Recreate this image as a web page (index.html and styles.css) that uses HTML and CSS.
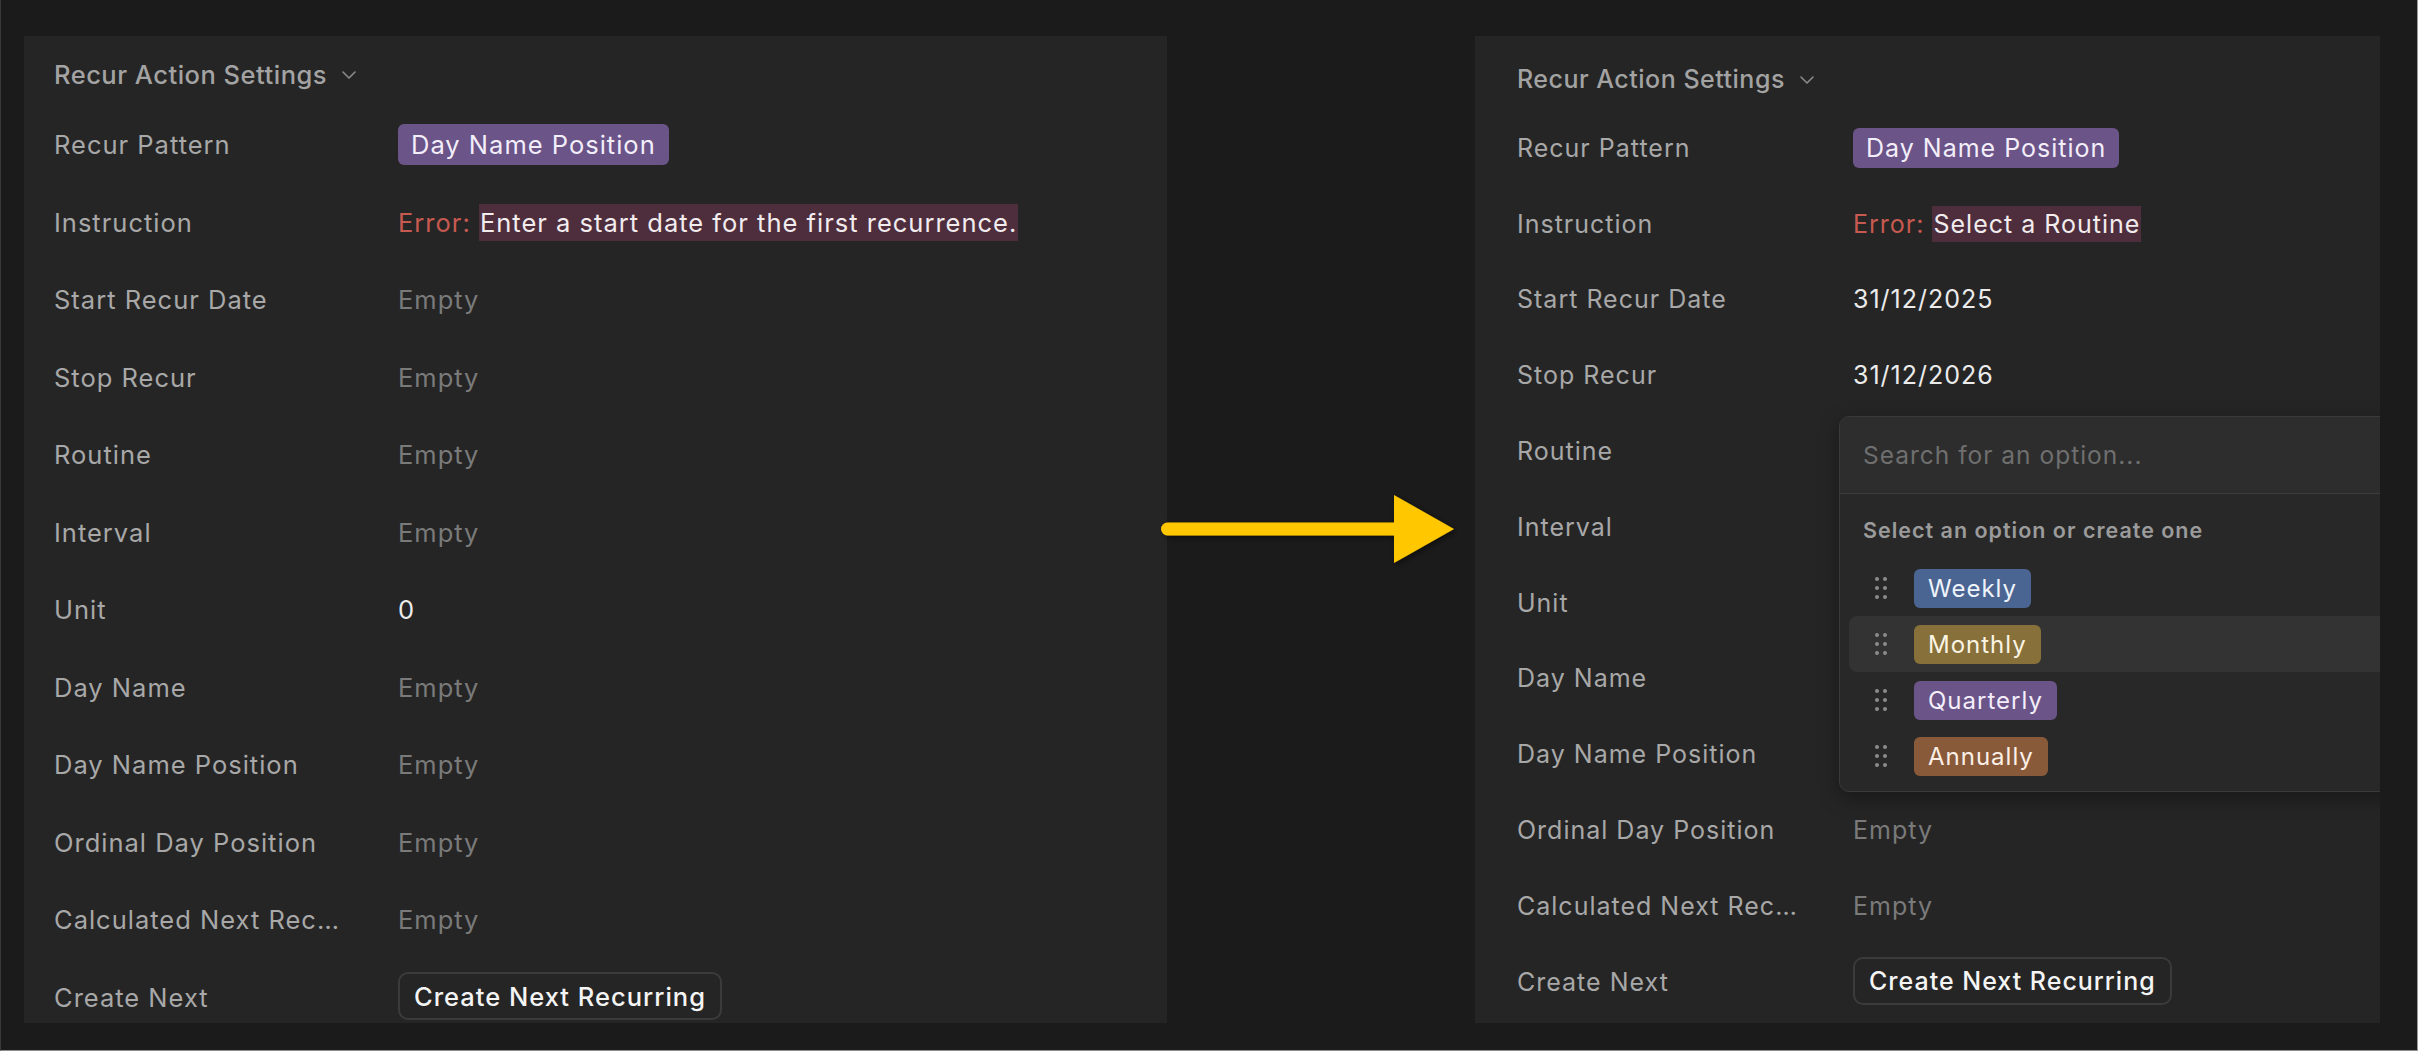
FILE: index.html
```html
<!DOCTYPE html>
<html lang="en">
<head>
  <meta charset="UTF-8">
  <meta name="viewport" content="width=device-width, initial-scale=1.0">
  <title>Recur Action Settings</title>
  <link rel="stylesheet" href="styles.css">
</head>
<body>
  <div class="frame">

    <!-- before: no start date yet -->
    <section class="panel panel-left">
      <div class="panel-head">
        Recur Action Settings
        <svg class="chevron" width="16" height="10" viewBox="0 0 16 10"><path d="M2 2l6 6 6-6" fill="none" stroke="#8a8a8a" stroke-width="1.6" stroke-linecap="round" stroke-linejoin="round"/></svg>
      </div>
      <div class="props">
        <div class="row"><span class="label">Recur Pattern</span><span class="value"><span class="chip chip-purple">Day Name Position</span></span></div>
        <div class="row"><span class="label">Instruction</span><span class="value"><span class="err">Error:</span> <span class="err-msg">Enter a start date for the first recurrence.</span></span></div>
        <div class="row"><span class="label">Start Recur Date</span><span class="value empty">Empty</span></div>
        <div class="row"><span class="label">Stop Recur</span><span class="value empty">Empty</span></div>
        <div class="row"><span class="label">Routine</span><span class="value empty">Empty</span></div>
        <div class="row"><span class="label">Interval</span><span class="value empty">Empty</span></div>
        <div class="row"><span class="label">Unit</span><span class="value">0</span></div>
        <div class="row"><span class="label">Day Name</span><span class="value empty">Empty</span></div>
        <div class="row"><span class="label">Day Name Position</span><span class="value empty">Empty</span></div>
        <div class="row"><span class="label">Ordinal Day Position</span><span class="value empty">Empty</span></div>
        <div class="row"><span class="label">Calculated Next Recurrence</span><span class="value empty">Empty</span></div>
        <div class="row"><span class="label">Create Next</span><span class="value"><button class="btn">Create Next Recurring</button></span></div>
      </div>
    </section>

    <div class="arrow">
      <svg width="300" height="80" viewBox="0 0 300 80">
        <defs>
          <filter id="shadow" x="-20%" y="-20%" width="140%" height="140%">
            <feDropShadow dx="2" dy="2" stdDeviation="3" flood-color="#000" flood-opacity="0.55"/>
          </filter>
        </defs>
        <g filter="url(#shadow)" fill="#ffc700">
          <path d="M7.5 39H238" stroke="#ffc700" stroke-width="13" stroke-linecap="round"/>
          <polygon points="234,5 294,39 234,73"/>
        </g>
      </svg>
    </div>

    <!-- after: dates filled, routine picker open -->
    <section class="panel panel-right">
      <div class="panel-head">
        Recur Action Settings
        <svg class="chevron" width="16" height="10" viewBox="0 0 16 10"><path d="M2 2l6 6 6-6" fill="none" stroke="#8a8a8a" stroke-width="1.6" stroke-linecap="round" stroke-linejoin="round"/></svg>
      </div>
      <div class="props">
        <div class="row"><span class="label">Recur Pattern</span><span class="value"><span class="chip chip-purple">Day Name Position</span></span></div>
        <div class="row"><span class="label">Instruction</span><span class="value"><span class="err">Error:</span> <span class="err-msg">Select a Routine</span></span></div>
        <div class="row"><span class="label">Start Recur Date</span><span class="value">31/12/2025</span></div>
        <div class="row"><span class="label">Stop Recur</span><span class="value">31/12/2026</span></div>
        <div class="row"><span class="label">Routine</span><span class="value empty">Empty</span></div>
        <div class="row"><span class="label">Interval</span><span class="value empty">Empty</span></div>
        <div class="row"><span class="label">Unit</span><span class="value">0</span></div>
        <div class="row"><span class="label">Day Name</span><span class="value empty">Empty</span></div>
        <div class="row"><span class="label">Day Name Position</span><span class="value empty">Empty</span></div>
        <div class="row"><span class="label">Ordinal Day Position</span><span class="value empty">Empty</span></div>
        <div class="row"><span class="label">Calculated Next Recurrence</span><span class="value empty">Empty</span></div>
        <div class="row"><span class="label">Create Next</span><span class="value"><button class="btn">Create Next Recurring</button></span></div>
      </div>

      <div class="dropdown">
        <div class="dd-search">Search for an option...</div>
        <div class="dd-hint">Select an option or create one</div>
        <div class="dd-options">
          <div class="option">
            <svg class="grip" width="12" height="22" viewBox="0 0 12 22"><g fill="#8c8c8c"><circle cx="2" cy="2" r="2"/><circle cx="10" cy="2" r="2"/><circle cx="2" cy="11" r="2"/><circle cx="10" cy="11" r="2"/><circle cx="2" cy="20" r="2"/><circle cx="10" cy="20" r="2"/></g></svg>
            <span class="chip chip-blue">Weekly</span>
          </div>
          <div class="option active">
            <svg class="grip" width="12" height="22" viewBox="0 0 12 22"><g fill="#8c8c8c"><circle cx="2" cy="2" r="2"/><circle cx="10" cy="2" r="2"/><circle cx="2" cy="11" r="2"/><circle cx="10" cy="11" r="2"/><circle cx="2" cy="20" r="2"/><circle cx="10" cy="20" r="2"/></g></svg>
            <span class="chip chip-yellow">Monthly</span>
          </div>
          <div class="option">
            <svg class="grip" width="12" height="22" viewBox="0 0 12 22"><g fill="#8c8c8c"><circle cx="2" cy="2" r="2"/><circle cx="10" cy="2" r="2"/><circle cx="2" cy="11" r="2"/><circle cx="10" cy="11" r="2"/><circle cx="2" cy="20" r="2"/><circle cx="10" cy="20" r="2"/></g></svg>
            <span class="chip chip-purple">Quarterly</span>
          </div>
          <div class="option">
            <svg class="grip" width="12" height="22" viewBox="0 0 12 22"><g fill="#8c8c8c"><circle cx="2" cy="2" r="2"/><circle cx="10" cy="2" r="2"/><circle cx="2" cy="11" r="2"/><circle cx="10" cy="11" r="2"/><circle cx="2" cy="20" r="2"/><circle cx="10" cy="20" r="2"/></g></svg>
            <span class="chip chip-brown">Annually</span>
          </div>
        </div>
      </div>
    </section>

  </div>
</body>
</html>
```

FILE: styles.css
```css
* {
  box-sizing: border-box;
}
body {
  margin: 0;
  background: #1b1b1b;
  font-family: Inter, "Noto Sans", sans-serif;
  color: #a6a6a6;
  letter-spacing: 1px;
}
.frame {
  width: 2418px;
  height: 1051px;
  display: flex;
  align-items: flex-start;
  padding: 36px 37px 0 23px;
  border-left: 1px solid #3a3a3a;
  border-right: 1px solid #9a9a9a;
  border-bottom: 1px solid #8e8e8e;
  overflow: hidden;
}
.panel {
  position: relative;
  background: #252525;
  height: 987px;
  overflow: hidden;
  flex-shrink: 0;
}
.panel-left {
  width: 1143px;
  padding: 6px 0 0 30px;
  font-size: 25.5px;
}
.panel-right {
  width: 905px;
  padding: 12px 0 0 42px;
  font-size: 25px;
}
.panel-head {
  display: flex;
  align-items: center;
  gap: 14px;
  height: 64px;
  font-weight: 500;
  letter-spacing: 0.5px;
  color: #a3a3a3;
}
.panel-right .panel-head {
  height: 62px;
}
.chevron {
  margin-top: 2px;
}
.row {
  display: flex;
  align-items: center;
  height: 77.5px;
}
.panel-right .row {
  height: 75.8px;
}
.label {
  width: 344px;
  flex-shrink: 0;
  padding-right: 50px;
  white-space: nowrap;
  overflow: hidden;
  text-overflow: ellipsis;
  color: #a8a8a8;
}
.panel-right .label {
  width: 336px;
}
.value {
  color: #ebebeb;
  white-space: nowrap;
}
.value.empty {
  color: #7a7a7a;
}
.chip {
  display: inline-flex;
  align-items: center;
  height: 41px;
  padding: 0 13px;
  border-radius: 6px;
  color: #f3eefa;
}
.panel-right .chip {
  height: 40px;
}
.chip-purple { background: #6a5488; }
.chip-blue { background: #4a6592; color: #eef3fb; }
.chip-yellow { background: #87703a; color: #fbf4e2; }
.chip-brown { background: #895a3a; color: #fbefe6; }
.err {
  color: #c75a50;
}
.err-msg {
  background: #4e2e3d;
  color: #f2ecee;
  padding: 3px 1px;
}
.btn {
  font-family: inherit;
  font-size: inherit;
  letter-spacing: inherit;
  font-weight: 500;
  color: #f4f4f4;
  background: #252525;
  border: 2px solid #3b3b3b;
  border-radius: 10px;
  height: 48px;
  padding: 0 14px;
  margin-top: -2px;
}
.arrow {
  width: 308px;
  flex-shrink: 0;
  margin-top: 454px;
  position: relative;
  z-index: 2;
}
.arrow svg {
  display: block;
  margin-left: -7px;
}
.dropdown {
  position: absolute;
  left: 364px;
  top: 380px;
  width: 620px;
  background: #282828;
  border: 1px solid #3a3a3a;
  border-radius: 10px;
  box-shadow: 0 6px 20px rgba(0, 0, 0, 0.35);
  overflow: hidden;
}
.dd-search {
  height: 77px;
  display: flex;
  align-items: center;
  padding-left: 23px;
  background: #2d2d2d;
  border-bottom: 1px solid #3c3c3c;
  font-size: 24.5px;
  color: #6f6f6f;
}
.dd-hint {
  padding: 24px 0 18px 23px;
  line-height: 24px;
  font-size: 21.5px;
  font-weight: 600;
  color: #9b9b9b;
}
.dd-options {
  padding: 0 0 7px 9px;
}
.option {
  display: flex;
  align-items: center;
  gap: 27px;
  height: 56px;
  padding-left: 26px;
  border-radius: 8px 0 0 8px;
}
.option.active {
  background: #333333;
}
.option .chip {
  height: 39px;
  padding: 0 14px;
  font-size: 24px;
}
.grip {
  flex-shrink: 0;
}
```
